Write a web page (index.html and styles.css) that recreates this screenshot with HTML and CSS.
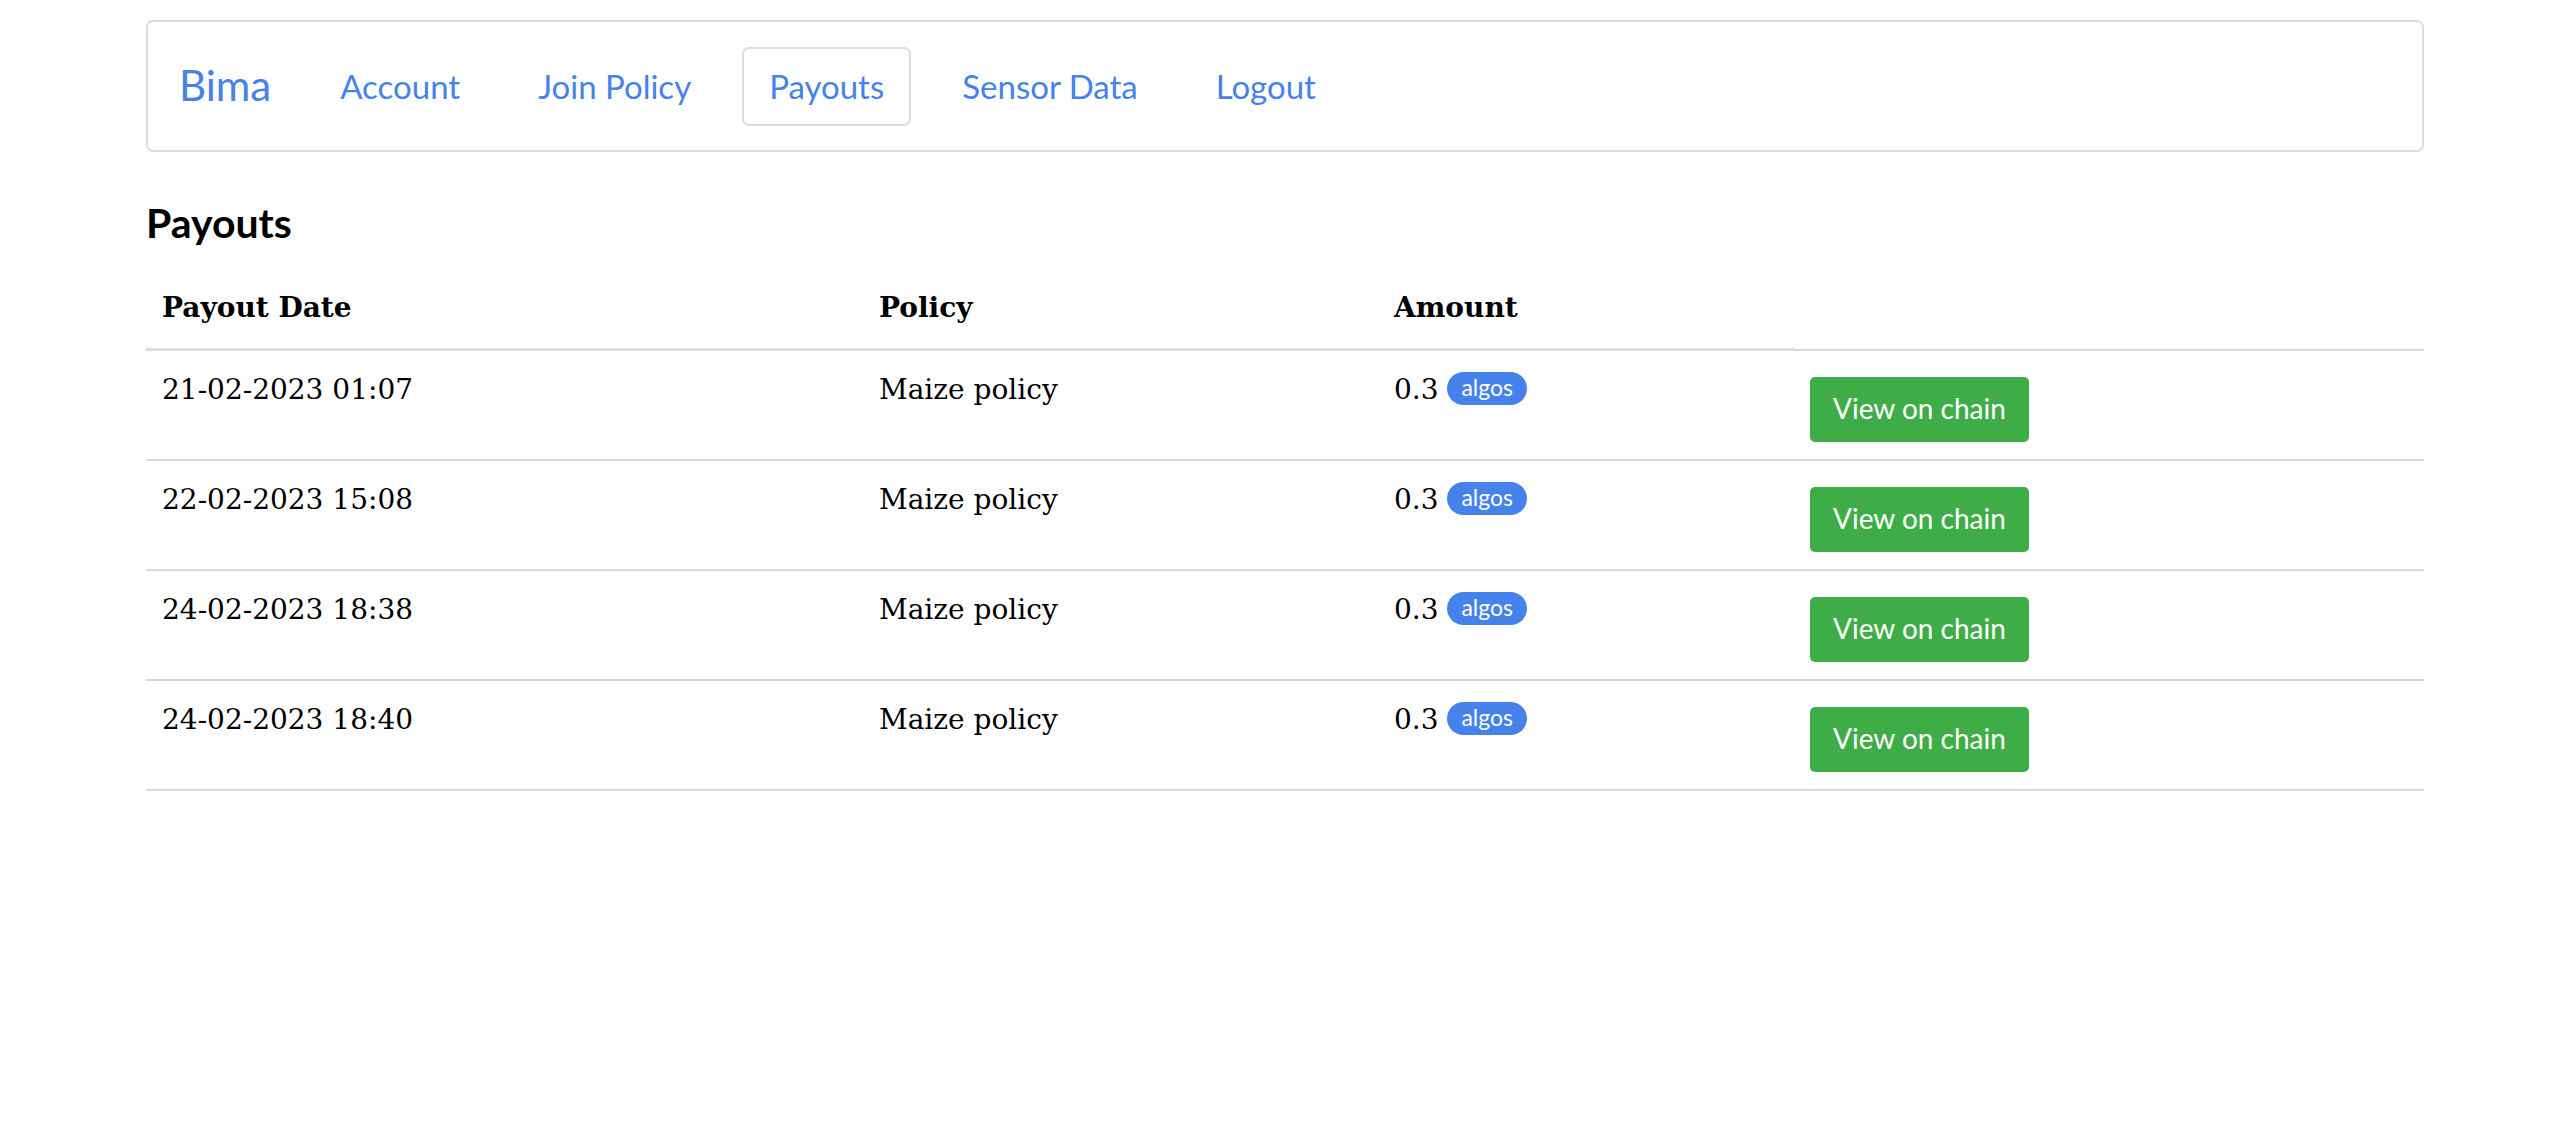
FILE: index.html
```html
<!DOCTYPE html>
<html lang="en">
<head>
<meta charset="utf-8">
<title>Bima - Payouts</title>
<link rel="stylesheet" href="styles.css">
</head>
<body>
<div class="container">
  <nav class="navbar">
    <a class="brand" href="#">Bima</a>
    <ul class="nav">
      <li><a class="nav-link" href="#">Account</a></li>
      <li><a class="nav-link" href="#">Join Policy</a></li>
      <li><a class="nav-link active" href="#">Payouts</a></li>
      <li><a class="nav-link" href="#">Sensor Data</a></li>
      <li><a class="nav-link" href="#">Logout</a></li>
    </ul>
  </nav>

  <h2 class="page-title">Payouts</h2>

  <table class="payouts">
    <colgroup>
      <col class="c-date"><col class="c-policy"><col class="c-amount"><col class="c-action">
    </colgroup>
    <thead>
      <tr><th>Payout Date</th><th>Policy</th><th>Amount</th></tr>
    </thead>
    <tbody>
      <tr>
        <td>21-02-2023 01:07</td>
        <td>Maize policy</td>
        <td>0.3 <span class="badge">algos</span></td>
        <td><a class="btn" href="#">View on chain</a></td>
      </tr>
      <tr>
        <td>22-02-2023 15:08</td>
        <td>Maize policy</td>
        <td>0.3 <span class="badge">algos</span></td>
        <td><a class="btn" href="#">View on chain</a></td>
      </tr>
      <tr>
        <td>24-02-2023 18:38</td>
        <td>Maize policy</td>
        <td>0.3 <span class="badge">algos</span></td>
        <td><a class="btn" href="#">View on chain</a></td>
      </tr>
      <tr>
        <td>24-02-2023 18:40</td>
        <td>Maize policy</td>
        <td>0.3 <span class="badge">algos</span></td>
        <td><a class="btn" href="#">View on chain</a></td>
      </tr>
    </tbody>
  </table>
</div>
</body>
</html>
```

FILE: styles.css
```css
html, body {
  margin: 0;
  padding: 0;
  background: #ffffff;
}

body {
  font-family: "DejaVu Serif", Georgia, serif;
  color: #000;
}

.container {
  width: 2278px;
  margin: 0 0 0 146px;
}

/* Navbar */
.navbar {
  margin-top: 20px;
  height: 132px;
  box-sizing: border-box;
  border: 2px solid #dddddd;
  border-radius: 7px;
  display: flex;
  align-items: center;
  padding: 0 31px;
  font-family: Lato, "Open Sans", sans-serif;
}

.brand {
  font-size: 42px;
  line-height: 1.2;
  color: #4582ec;
  text-decoration: none;
  margin-right: 42px;
  margin-bottom: 2px;
}

.nav {
  list-style: none;
  margin: 0;
  padding: 0;
  display: flex;
  align-items: center;
  gap: 24px;
}

.nav-link {
  display: block;
  font-size: 33px;
  line-height: 51px;
  padding: 12px 25px;
  border: 2px solid transparent;
  border-radius: 7px;
  color: #4582ec;
  text-decoration: none;
}

.nav-link.active {
  border-color: #dddddd;
}

/* Heading */
.page-title {
  font-family: Lato, "Open Sans", sans-serif;
  font-weight: 700;
  font-size: 41px;
  line-height: 1.2;
  margin: 46px 0 21px 0;
  color: #000;
}

/* Table */
.payouts {
  width: 100%;
  border-collapse: collapse;
  font-size: 28px;
  line-height: 1.5;
}

.c-date { width: 717px; }
.c-policy { width: 515px; }
.c-amount { width: 416px; }

.payouts th {
  text-align: left;
  font-weight: 700;
  padding: 19px 16px;
  border-bottom: 3px solid #dcdcdc;
  vertical-align: bottom;
}

.payouts td {
  padding: 18px 16px 17px 16px;
  vertical-align: top;
  border-top: 2px solid #d9d9d9;
}

.payouts tbody tr:last-child td {
  border-bottom: 2px solid #d9d9d9;
}

.badge {
  display: inline-block;
  font-family: Lato, "Open Sans", sans-serif;
  font-size: 23px;
  line-height: 1;
  color: #ffffff;
  background: #4582ec;
  border-radius: 17px;
  padding: 4px 14px 6px 14px;
  vertical-align: 3px;
}

.btn {
  display: inline-block;
  margin-top: 8px;
  height: 65px;
  box-sizing: border-box;
  padding: 0 23px;
  line-height: 63px;
  font-family: Lato, "Open Sans", sans-serif;
  font-size: 28px;
  color: #ffffff;
  background: #3fad47;
  border-radius: 5px;
  text-decoration: none;
}
```
